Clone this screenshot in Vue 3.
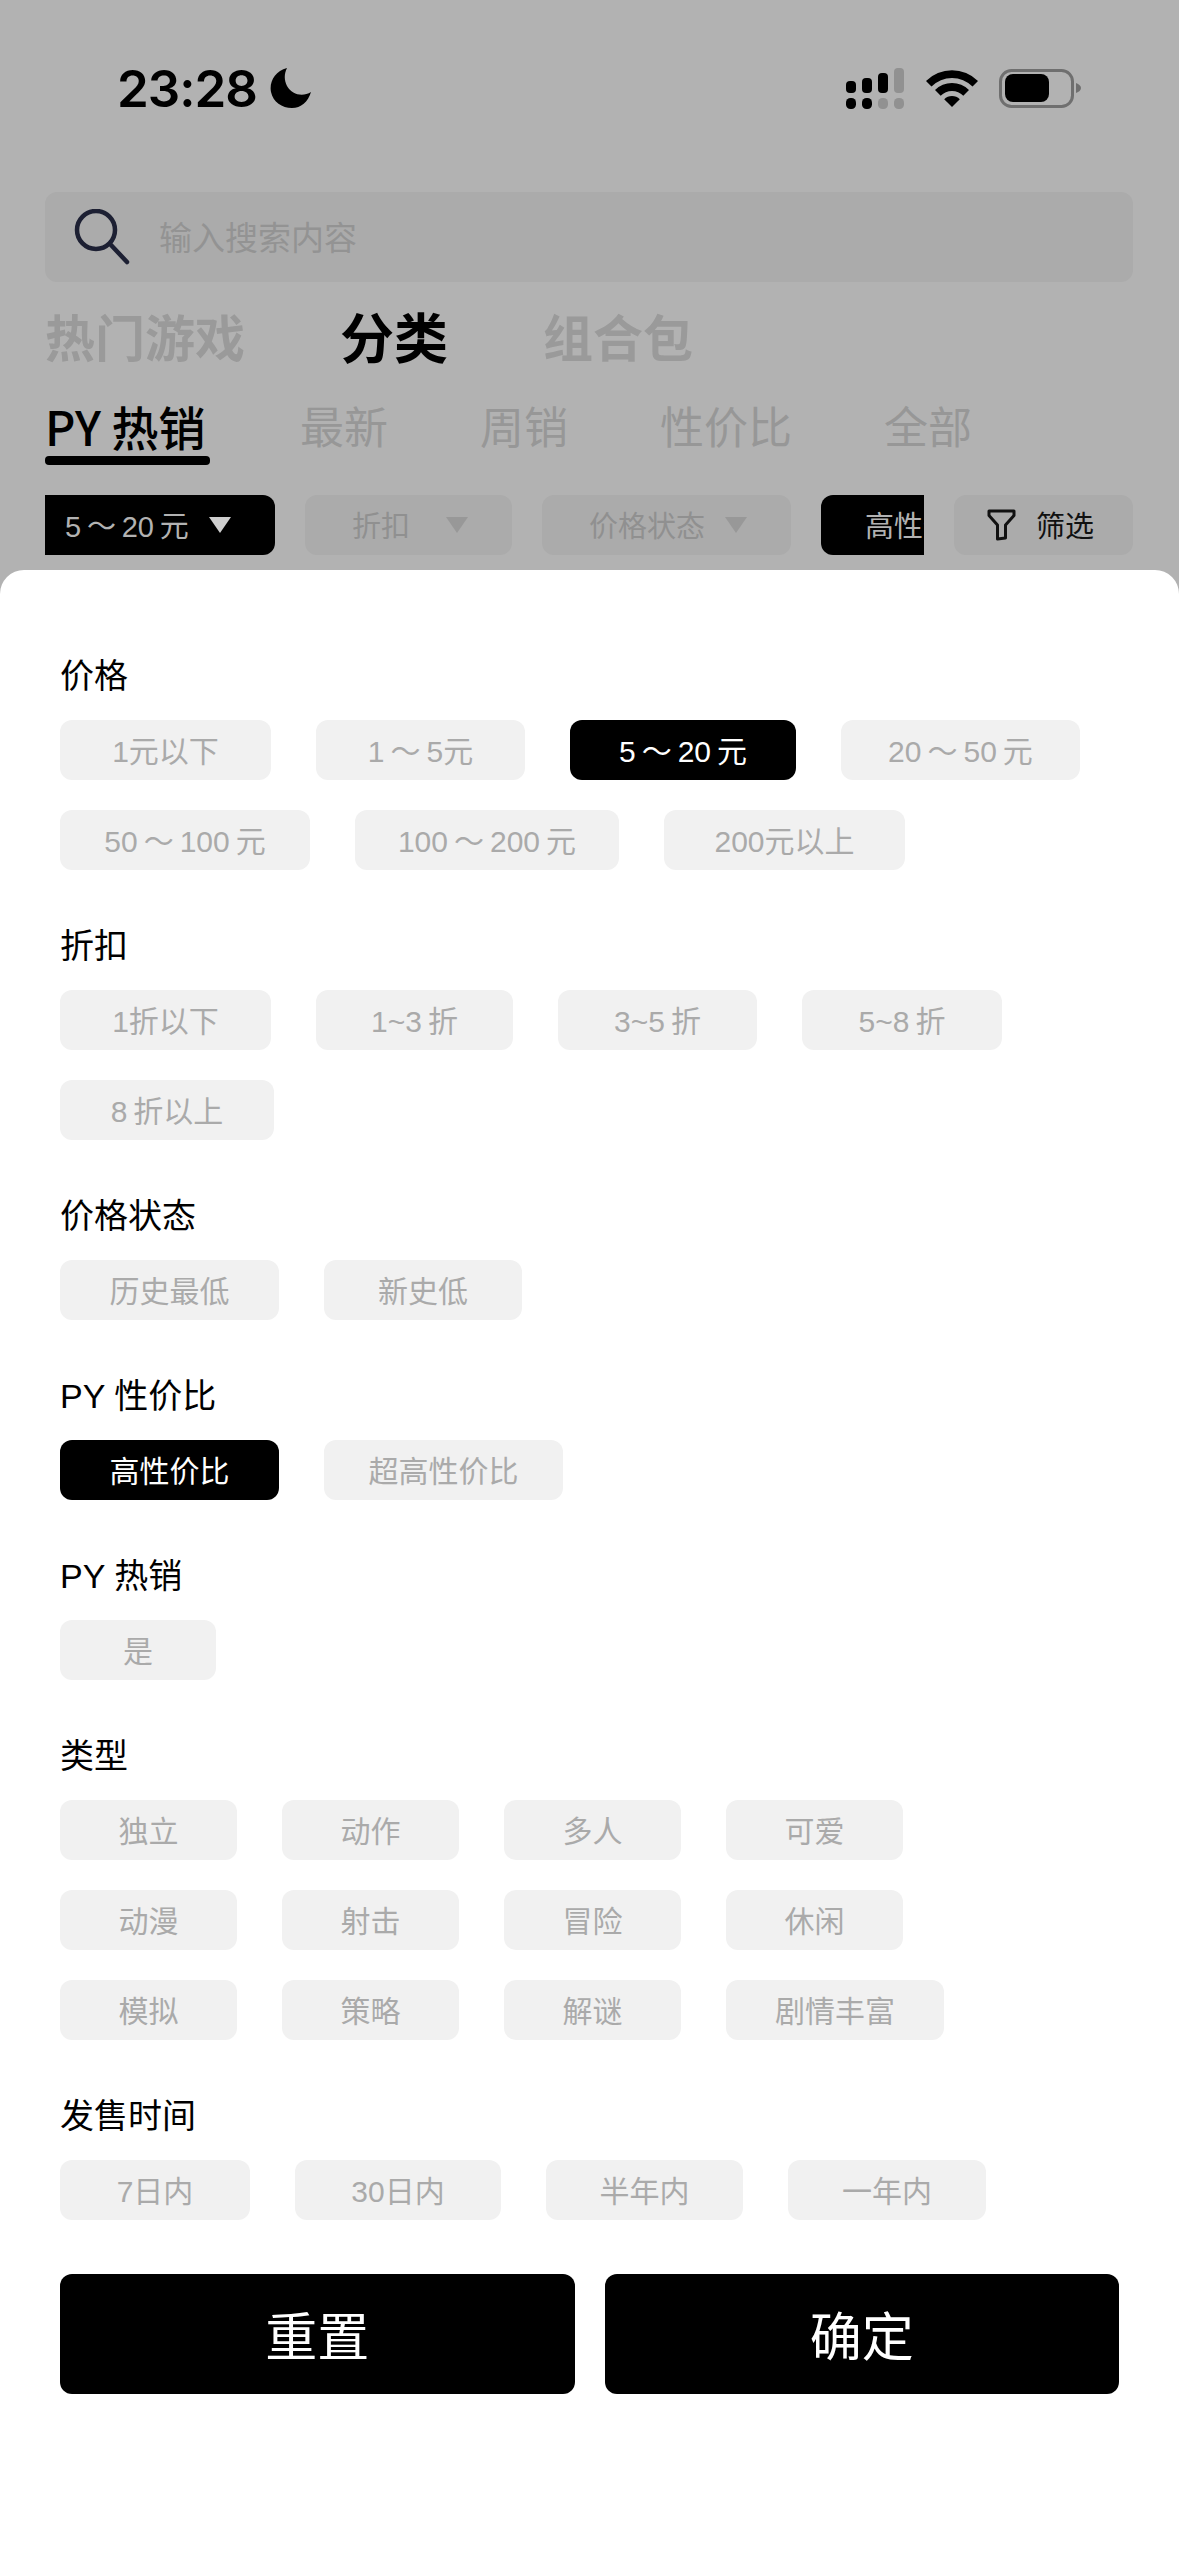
<template>
  <div class="page">
    <div class="status">
      <div class="status-left">
        <span class="time">23:28</span>
        <svg class="moon" width="41" height="40" viewBox="0 0 41 40">
          <path d="M17 0C5 3-1 14 1 24c2 10 11 16 21 16 9 0 16-6 19-16-8 5-19 3-24-6-3-6-3-12 0-18z" fill="#000"/>
        </svg>
      </div>
      <div class="status-right">
        <svg width="58" height="41" viewBox="0 0 58 41">
          <rect x="0" y="13" width="10" height="12" rx="4" fill="#000"/>
          <rect x="16" y="10" width="10" height="15" rx="4" fill="#000"/>
          <rect x="32" y="5" width="10" height="20" rx="4" fill="#000"/>
          <rect x="48" y="0" width="10" height="25" rx="4" fill="#919191"/>
          <rect x="0" y="30" width="10" height="11" rx="4.5" fill="#000"/>
          <rect x="16" y="30" width="10" height="11" rx="4.5" fill="#000"/>
          <rect x="32" y="30" width="10" height="11" rx="4.5" fill="#919191"/>
          <rect x="48" y="30" width="10" height="11" rx="4.5" fill="#919191"/>
        </svg>
        <svg width="52" height="37" viewBox="0 0 52 37">
          <path d="M0 11A37 37 0 0 1 52 11L46.5 16.5A29 29 0 0 0 5.500 16.500Z" fill="#000"/>
          <path d="M9 20A24 24 0 0 1 43 20L37.300 25.700A16 16 0 0 0 14.700 25.700Z" fill="#000"/>
          <path d="M18.200 29.200A11 11 0 0 1 33.800 29.200L26 37Z" fill="#000"/>
        </svg>
        <svg class="battery" width="82" height="39" viewBox="0 0 82 39">
          <rect x="1.500" y="1.500" width="72" height="36" rx="11" fill="none" stroke="#6f6f6f" stroke-width="3"/>
          <rect x="6" y="5" width="44" height="28" rx="8" fill="#000"/>
          <path d="M77 14c3 1 5 3 5 5s-2 4-5 5z" fill="#6f6f6f"/>
        </svg>
      </div>
    </div>

    <div class="search">
      <svg width="56" height="56" viewBox="0 0 56 56">
        <circle cx="22" cy="21" r="19" fill="none" stroke="#1d2033" stroke-width="4.500"/>
        <path d="M37 36L53 53" stroke="#1d2033" stroke-width="4.500" stroke-linecap="round"/>
      </svg>
      <span class="placeholder">输入搜索内容</span>
    </div>

    <div class="tabs">
      <span v-for="t in mainTabs" :key="t" class="tab" :class="{ active: t === '分类' }">{{ t }}</span>
    </div>

    <div class="subtabs">
      <div v-for="t in subTabs" :key="t" class="subtab" :class="{ active: t === 'PY 热销' }">
        <span>{{ t }}</span>
        <i v-if="t === 'PY 热销'" class="bar"></i>
      </div>
    </div>

    <div class="filters">
      <div class="scroller">
        <div
          v-for="f in quickFilters"
          :key="f.text"
          class="quick"
          :class="{ on: f.on }"
          :style="{ width: f.w + 'px' }"
        >
          <span class="quick-text">{{ f.text }}</span>
          <i class="tri"></i>
        </div>
        <div class="quick on cut"><span class="quick-text">高性价比</span></div>
      </div>
      <div class="screen">
        <svg width="29" height="32" viewBox="0 0 29 32">
          <path d="M2 2H27V6.500L18.500 16V29L10.500 30V16L2 6.500Z" fill="none" stroke="#111" stroke-width="3" stroke-linejoin="round"/>
        </svg>
        <span class="quick-text">筛选</span>
      </div>
    </div>

    <div class="sheet">
      <section v-for="g in groups" :key="g.title" class="group">
        <h3>{{ g.title }}</h3>
        <div class="chips">
          <span
            v-for="c in g.items"
            :key="c.t"
            class="chip"
            :class="{ on: c.on }"
            :style="{ width: c.w + 'px' }"
          >{{ c.t }}</span>
        </div>
      </section>
      <div class="actions">
        <button>重置</button>
        <button>确定</button>
      </div>
    </div>
  </div>
</template>

<script setup>
const mainTabs = ['热门游戏', '分类', '组合包']
const subTabs = ['PY 热销', '最新', '周销', '性价比', '全部']

const quickFilters = [
  { text: '5\u2009～\u200920\u2009元', w: 242, on: true },
  { text: '折扣', w: 207 },
  { text: '价格状态', w: 249 }
]

const chip = (t, w, on = false) => ({ t, w, on })

const groups = [
  {
    title: '价格',
    items: [
      chip('1元以下', 211),
      chip('1\u2009～\u20095元', 209),
      chip('5\u2009～\u200920\u2009元', 226, true),
      chip('20\u2009～\u200950\u2009元', 239),
      chip('50\u2009～\u2009100\u2009元', 250),
      chip('100\u2009～\u2009200\u2009元', 264),
      chip('200元以上', 241)
    ]
  },
  {
    title: '折扣',
    items: [
      chip('1折以下', 211),
      chip('1~3\u2009折', 197),
      chip('3~5\u2009折', 199),
      chip('5~8\u2009折', 200),
      chip('8\u2009折以上', 214)
    ]
  },
  { title: '价格状态', items: [chip('历史最低', 219), chip('新史低', 198)] },
  { title: 'PY 性价比', items: [chip('高性价比', 219, true), chip('超高性价比', 239)] },
  { title: 'PY 热销', items: [chip('是', 156)] },
  {
    title: '类型',
    items: [
      chip('独立', 177), chip('动作', 177), chip('多人', 177), chip('可爱', 177),
      chip('动漫', 177), chip('射击', 177), chip('冒险', 177), chip('休闲', 177),
      chip('模拟', 177), chip('策略', 177), chip('解谜', 177), chip('剧情丰富', 218)
    ]
  },
  {
    title: '发售时间',
    items: [chip('7日内', 190), chip('30日内', 206), chip('半年内', 197), chip('一年内', 198)]
  }
]
</script>

<style>
body {
  background: #b2b2b2;
}
</style>

<style scoped>
.page {
  width: 1179px;
  height: 2556px;
  display: flex;
  flex-direction: column;
  overflow: hidden;
  background: #b2b2b2;
  font-family: "Liberation Sans", "Noto Sans CJK SC", sans-serif;
}

.status {
  height: 176px;
  flex: none;
  display: flex;
  align-items: center;
  justify-content: space-between;
  padding: 0 98px 0 117px;
}

.status-left {
  display: flex;
  align-items: center;
  gap: 13px;
}

.time {
  font-family: Inter, sans-serif;
  font-size: 51px;
  font-weight: 600;
  letter-spacing: -1px;
  color: #000;
}

.status-right {
  display: flex;
  align-items: center;
  gap: 22px;
}

.battery {
  margin-left: -1px;
}

.search {
  flex: none;
  height: 90px;
  margin: 16px 46px 0 45px;
  padding-left: 29px;
  display: flex;
  align-items: center;
  gap: 29px;
  background: #ababab;
  border-radius: 12px;
}

.placeholder {
  margin-bottom: 2px;
  font-size: 33px;
  color: #939393;
}

.tabs {
  flex: none;
  height: 66px;
  margin: 20px 0 4px 45px;
  display: flex;
  align-items: center;
  gap: 95px;
}

.tab {
  font-size: 50px;
  font-weight: 700;
  color: #9a9a9a;
}

.tab.active {
  font-size: 54px;
  color: #000;
}

.subtabs {
  flex: none;
  margin: 26px 0 0 45px;
  padding-top: 3px;
  height: 64px;
  display: flex;
  gap: 92px;
}

.subtab {
  display: flex;
  flex-direction: column;
  font-size: 44px;
  line-height: 55px;
  color: #979797;
}

.subtab.active {
  width: 165px;
  margin-right: -2px;
  font-family: "Noto Sans CJK SC", sans-serif;
  font-size: 47px;
  font-weight: 500;
  color: #000;
  white-space: nowrap;
}

.subtab.active span {
  height: 55px;
  margin-top: -3px;
  margin-bottom: 3px;
}

.bar {
  height: 9px;
  border-radius: 4px;
  background: #000;
}

.filters {
  flex: none;
  height: 60px;
  margin: 30px 46px 0 45px;
  display: flex;
  gap: 30px;
}

.scroller {
  width: 879px;
  flex: none;
  display: flex;
  gap: 30px;
  overflow: hidden;
}

.quick {
  flex: none;
  box-sizing: border-box;
  display: flex;
  align-items: center;
  justify-content: space-between;
  padding: 0 44px 0 47px;
  background: #ababab;
  border-radius: 12px;
  font-size: 29px;
  color: #909090;
}

.quick-text {
  margin-bottom: 2px;
}

.quick.on {
  background: #000;
  color: #b2b2b2;
}

.quick:first-child {
  margin-left: -12px;
  padding-left: 32px;
}

.quick.cut {
  white-space: nowrap;
  width: 240px;
  padding-left: 44px;
  justify-content: flex-start;
}

.tri {
  width: 0;
  height: 0;
  border-left: 11.500px solid transparent;
  border-right: 11.500px solid transparent;
  border-top: 16px solid #989898;
}

.quick.on .tri {
  border-top-color: #cfcfcf;
}

.screen {
  flex: 1;
  display: flex;
  align-items: center;
  gap: 20px;
  padding-left: 33px;
  background: #ababab;
  border-radius: 12px;
  font-size: 29px;
  color: #111;
}

.sheet {
  flex: 1;
  margin-top: 15px;
  padding: 82px 60px 0;
  background: #fff;
  border-radius: 24px 24px 0 0;
}

.group {
  margin-bottom: 52px;
}

.group h3 {
  margin: 0 0 20px;
  font-size: 34px;
  font-weight: 400;
  line-height: 48px;
  color: #000;
}

.chips {
  display: flex;
  flex-wrap: wrap;
  gap: 30px 45px;
  width: 1060px;
}

.chip {
  height: 60px;
  box-sizing: border-box;
  padding-bottom: 3px;
  display: flex;
  align-items: center;
  justify-content: center;
  background: #f1f1f1;
  border-radius: 12px;
  font-size: 30px;
  color: #aaa;
  white-space: nowrap;
}

.chip.on {
  background: #000;
  color: #fff;
}

.actions {
  margin-top: 54px;
  display: flex;
  gap: 30px;
}

.actions button {
  flex: 1;
  height: 120px;
  padding-bottom: 3px;
  border: 0;
  border-radius: 12px;
  background: #000;
  color: #fff;
  font-family: inherit;
  font-size: 52px;
}
</style>
